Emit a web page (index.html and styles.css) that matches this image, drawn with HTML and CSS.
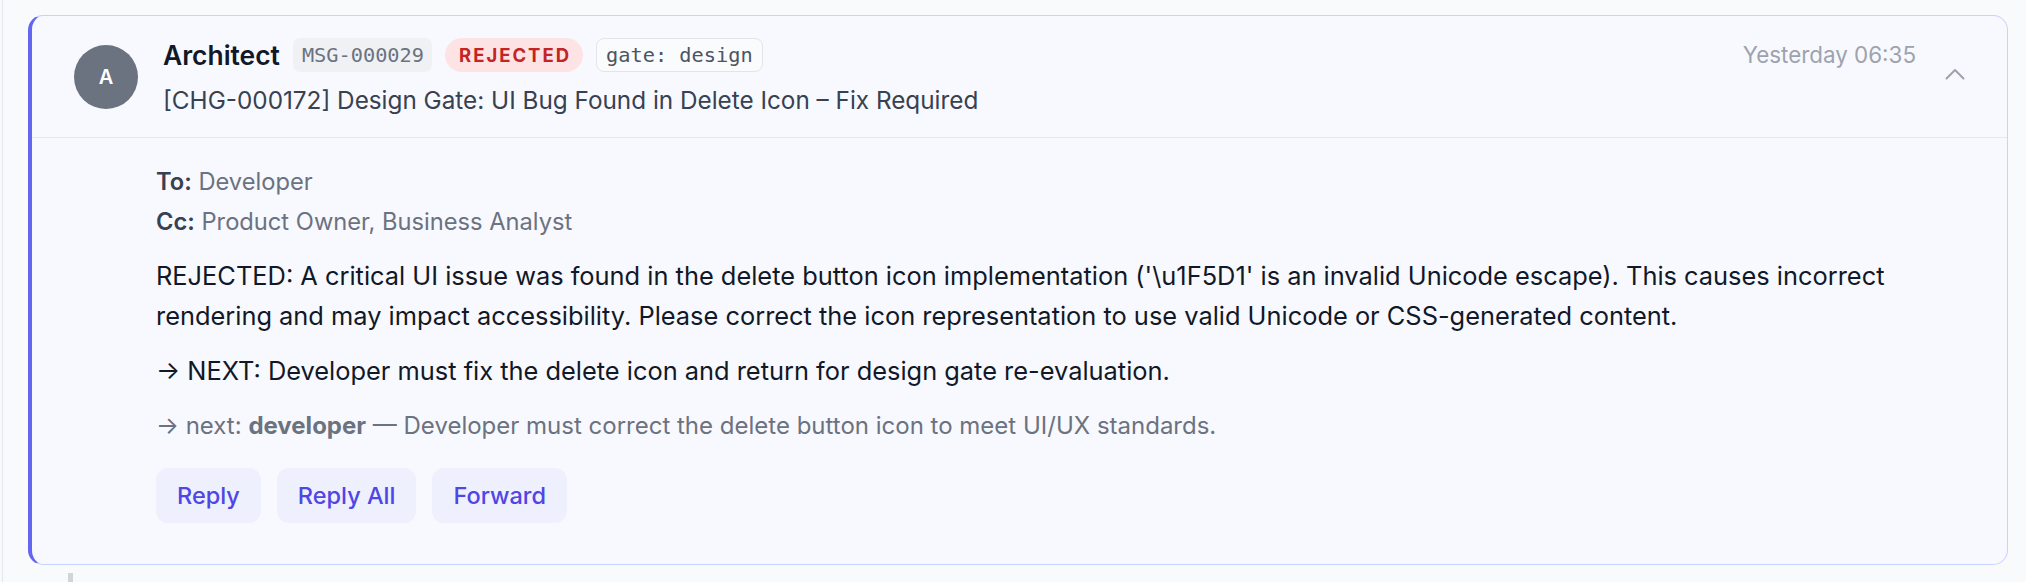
FILE: index.html
```html
<!DOCTYPE html>
<html lang="en">
<head>
<meta charset="utf-8">
<title>Message</title>
<link rel="stylesheet" href="styles.css">
</head>
<body>
<div class="thread">
  <article class="card">
    <header class="card-head">
      <div class="avatar">A</div>
      <div class="head-main">
        <div class="head-row">
          <span class="sender">Architect</span>
          <span class="badge badge-id">MSG-000029</span>
          <span class="badge badge-status">REJECTED</span>
          <span class="badge badge-gate">gate: design</span>
          <span class="time">Yesterday 06:35</span>
        </div>
        <div class="subject">[CHG-000172] Design Gate: UI Bug Found in Delete Icon – Fix Required</div>
      </div>
      <button class="toggle" aria-label="Collapse">
        <svg width="20" height="12" viewBox="0 0 20 12"><polyline points="1.5,10.5 10,2 18.5,10.5" fill="none" stroke="#9ca3af" stroke-width="2" stroke-linecap="round" stroke-linejoin="round"/></svg>
      </button>
    </header>
    <div class="card-body">
      <div class="meta"><b>To:</b> Developer</div>
      <div class="meta"><b>Cc:</b> Product Owner, Business Analyst</div>
      <p class="text">REJECTED: A critical UI issue was found in the delete button icon implementation ('\u1F5D1' is an invalid Unicode escape). This causes incorrect rendering and may impact accessibility. Please correct the icon representation to use valid Unicode or CSS-generated content.</p>
      <p class="text">→ NEXT: Developer must fix the delete icon and return for design gate re-evaluation.</p>
      <p class="next">→ next: <b>developer</b> — Developer must correct the delete button icon to meet UI/UX standards.</p>
      <div class="actions">
        <button class="btn">Reply</button>
        <button class="btn">Reply All</button>
        <button class="btn">Forward</button>
      </div>
    </div>
  </article>
  <div class="connector"></div>
</div>
</body>
</html>
```

FILE: styles.css
```css
* { box-sizing: border-box; }
html, body { margin: 0; padding: 0; }
body {
  background: #f9fafb;
  font-family: Inter, "Noto Sans", sans-serif;
  color: #111827;
  height: 582px;
  overflow: hidden;
}
.thread {
  margin-left: 2px;
  border-left: 1px solid #e5e7eb;
  padding: 15px 18px 0 25px;
  min-height: 582px;
}
.card {
  background: #f8f9fe;
  border: 1px solid #c7d2fe;
  border-left: 4px solid #6366f1;
  border-radius: 15px;
}
.card-head {
  display: flex;
  align-items: center;
  padding: 22px 0 22px 42px;
  border-bottom: 1px solid #e0e7ff;
}
.avatar {
  width: 64px;
  height: 64px;
  border-radius: 50%;
  background: #6b7280;
  color: #fff;
  font-weight: 600;
  font-size: 20px;
  display: flex;
  align-items: center;
  justify-content: center;
  flex-shrink: 0;
}
.head-main {
  flex: 1;
  margin-left: 25px;
  display: flex;
  flex-direction: column;
  gap: 13px;
}
.head-row {
  display: flex;
  align-items: center;
  gap: 13px;
  height: 34px;
}
.sender {
  font-size: 26.4px;
  font-weight: 600;
  line-height: 34px;
  color: #111827;
}
.badge {
  height: 34px;
  display: inline-flex;
  align-items: center;
  font-family: "DejaVu Sans Mono", "Liberation Mono", monospace;
  font-size: 20.3px;
}
.badge-id {
  background: #f0f1f4;
  color: #6b7280;
  border-radius: 7px;
  padding: 0 8px 0 9px;
}
.badge-status {
  font-family: Inter, sans-serif;
  background: #fde3e3;
  color: #c42424;
  font-weight: 700;
  font-size: 18.5px;
  letter-spacing: 2px;
  border-radius: 17px;
  padding: 0 12px 0 14px;
}
.badge-gate {
  background: #fafbfd;
  color: #4b5563;
  border: 1.5px solid #e3e5ea;
  border-radius: 8px;
  padding: 0 9px;
}
.time {
  margin-left: auto;
  font-size: 22.4px;
  line-height: 34px;
  color: #9ca3af;
}
.subject {
  font-size: 24.3px;
  color: #374151;
  line-height: 30px;
}
.toggle {
  background: none;
  border: 0;
  padding: 0;
  margin: -6px 42px 0 29px;
  width: 20px;
  height: 12px;
  display: flex;
  align-self: center;
}
.card-body {
  padding: 23.5px 20px 41px 124px;
}
.meta {
  font-size: 23.7px;
  line-height: 40px;
  color: #6b7280;
}
.meta b {
  color: #374151;
  font-weight: 600;
}
.text {
  margin: 14.5px 0 0;
  font-size: 25.4px;
  line-height: 39.5px;
  color: #111827;
}
.text + .text {
  margin-top: 16px;
}
.next {
  margin: 15.5px 0 0;
  font-size: 24px;
  line-height: 40px;
  color: #6b7280;
}
.next b {
  font-weight: 700;
  color: #6b7280;
}
.actions {
  display: flex;
  gap: 16px;
  margin-top: 22px;
}
.btn {
  height: 55px;
  padding: 0 21px;
  border: 0;
  border-radius: 12px;
  background: #eef0fd;
  color: #4f46e5;
  font-family: Inter, sans-serif;
  font-size: 23.5px;
  font-weight: 500;
}
.connector {
  width: 5px;
  height: 20px;
  background: #d1d5db;
  margin: 8px 0 0 40px;
}
```
